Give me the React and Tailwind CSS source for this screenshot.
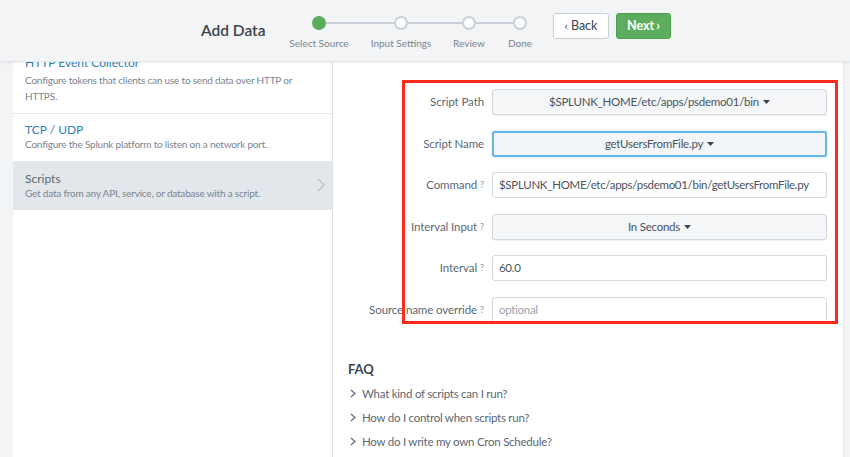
import React from "react";

const Caret = () => (
  <svg width="7" height="4" viewBox="0 0 7 4" className="ml-[4px] inline-block">
    <path d="M0 0 L7 0 L3.5 4 Z" fill="#3c444d" />
  </svg>
);

const Q = () => <sup className="ml-[3px] text-[9px] text-[#8a96a3] relative top-[-1px]">?</sup>;

function Row({ label, q, children }) {
  return (
    <div className="flex items-center h-[26px]">
      <div className="w-[136px] text-right text-[11.5px] tracking-[-0.1px] text-[#5c6773] whitespace-nowrap">
        {label}
        {q ? <Q /> : null}
      </div>
      <div className="ml-[8px] w-[335px] h-[26px]">{children}</div>
    </div>
  );
}

const SelectBtn = ({ text, focus }) => (
  <div
    className={
      "h-full w-full rounded-[3px] flex items-center justify-center text-[11.5px] tracking-[-0.25px] text-[#4a535d] " +
      (focus
        ? "border-[2px] border-[#67b7e6] bg-[#f3f6f8] shadow-[0_0_2px_#9fd3f0]"
        : "border border-[#d2d8de] bg-[#f4f6f8] shadow-[0_1px_1px_rgba(0,0,0,0.06)]")
    }
  >
    {text}
    <Caret />
  </div>
);

const TextInput = ({ text, placeholder }) => (
  <div className="h-full w-full rounded-[3px] border border-[#d2d8de] bg-white flex items-center px-[6px] text-[11.5px] tracking-[-0.3px]">
    {text ? <span className="text-[#4a535d]">{text}</span> : <span className="text-[#9aa3ad]">{placeholder}</span>}
  </div>
);

export default function App() {
  return (
    <div
      className="w-[850px] h-[457px] overflow-hidden bg-[#f2f4f5] flex flex-col"
      style={{ fontFamily: "Lato, 'Open Sans', sans-serif" }}
    >
      {/* Header */}
      <div className="relative z-10 h-[62px] shrink-0 bg-[#f2f4f5] border-b border-[#e1e5e9] shadow-[0_1px_3px_rgba(0,0,0,0.06)] flex items-start">
        <div className="ml-[201px] mt-[19px] w-[60px] text-[15.5px] font-semibold text-[#3c444d] leading-[22px] whitespace-nowrap">
          Add Data
        </div>
        {/* stepper */}
        <div className="ml-[18px] mt-[16px] flex flex-col">
          <div className="flex items-center pl-[33px]">
            <div className="w-[14px] h-[14px] rounded-full bg-[#5cae5e]" />
            <div className="w-[68px] h-[2px] bg-[#c9d0d7]" />
            <div className="w-[14px] h-[14px] rounded-full bg-white border-[2px] border-[#c9d0d7]" />
            <div className="w-[54px] h-[2px] bg-[#c9d0d7]" />
            <div className="w-[14px] h-[14px] rounded-full bg-white border-[2px] border-[#c9d0d7]" />
            <div className="w-[37px] h-[2px] bg-[#c9d0d7]" />
            <div className="w-[14px] h-[14px] rounded-full bg-white border-[2px] border-[#c9d0d7]" />
          </div>
          <div className="flex mt-[6px] text-[10px] text-[#7b8691] leading-[14px] whitespace-nowrap">
            <div className="w-[80px] text-center">Select Source</div>
            <div className="w-[80px] ml-[2px] text-center">Input Settings</div>
            <div className="w-[50px] ml-[3px] text-center">Review</div>
            <div className="w-[40px] ml-[6px] text-center">Done</div>
          </div>
        </div>
        <div className="ml-[13px] mt-[13px] flex gap-[7px]">
          <div className="w-[56px] h-[26px] rounded-[3px] border border-[#c9d0d7] bg-white flex items-center justify-center text-[#3c444d]">
            <span className="mr-[3px] text-[12px]">&lsaquo;</span>
            <span className="text-[12.5px]">Back</span>
          </div>
          <div className="w-[55px] h-[26px] rounded-[3px] bg-[#5cae5e] border border-[#4f9e52] flex items-center justify-center text-white font-bold text-[12.5px]">
            Next<span className="ml-[2px] text-[13px] font-bold">&rsaquo;</span>
          </div>
        </div>
      </div>

      {/* Body */}
      <div className="flex flex-1 min-h-0">
        <div className="w-[13px] shrink-0 bg-[#f2f4f5]" />
        {/* left list */}
        <div className="w-[320px] shrink-0 bg-white border-r border-[#dde2e7] overflow-hidden">
          <div className="mt-[-11px] px-[12px] pt-[4px] pb-[9px] border-b border-[#e3e7eb]">
            <div className="text-[12px] leading-[16px] text-[#2f7fb9]">HTTP Event Collector</div>
            <div className="text-[10px] tracking-[-0.2px] leading-[16px] text-[#7a8591] mt-[1px]">
              Configure tokens that clients can use to send data over HTTP or HTTPS.
            </div>
          </div>
          <div className="px-[12px] pt-[8px] pb-[10px] border-b border-[#e3e7eb]">
            <div className="text-[12px] leading-[15px] text-[#2f7fb9]">TCP / UDP</div>
            <div className="text-[10px] tracking-[-0.2px] leading-[14px] text-[#7a8591]">
              Configure the Splunk platform to listen on a network port.
            </div>
          </div>
          <div className="px-[12px] pt-[9px] pb-[10px] bg-[#e2e7ec] flex items-center">
            <div className="flex-1">
              <div className="text-[12px] leading-[15px] text-[#5c6773]">Scripts</div>
              <div className="text-[10px] tracking-[-0.2px] leading-[14px] text-[#7a8591]">
                Get data from any API, service, or database with a script.
              </div>
            </div>
            <svg width="8" height="14" viewBox="0 0 8 14" className="mr-[-5px] mt-[-2px]">
              <path d="M1 1 L7 7 L1 13" fill="none" stroke="#b9c2cb" strokeWidth="1.3" />
            </svg>
          </div>
        </div>
        {/* right content */}
        <div className="relative flex-1 bg-white">
          <div className="pl-[15px] pt-[27px] flex flex-col gap-[15.5px]">
            <Row label="Script Path">
              <SelectBtn text="$SPLUNK_HOME/etc/apps/psdemo01/bin" />
            </Row>
            <Row label="Script Name">
              <SelectBtn text="getUsersFromFile.py" focus />
            </Row>
            <Row label="Command" q>
              <TextInput text="$SPLUNK_HOME/etc/apps/psdemo01/bin/getUsersFromFile.py" />
            </Row>
            <Row label="Interval Input" q>
              <SelectBtn text="In Seconds" />
            </Row>
            <Row label="Interval" q>
              <TextInput text="60.0" />
            </Row>
            <Row label="Source name override" q>
              <TextInput placeholder="optional" />
            </Row>
          </div>
          <div className="pl-[15px] mt-[37px]">
            <div className="text-[13px] font-bold text-[#3c444d] leading-[18px]">FAQ</div>
            <div className="mt-[4px] flex flex-col text-[11.5px] tracking-[-0.25px] text-[#5c6773]">
              {[
                "What kind of scripts can I run?",
                "How do I control when scripts run?",
                "How do I write my own Cron Schedule?",
              ].map((t) => (
                <div key={t} className="h-[24px] flex items-center">
                  <svg width="6" height="9" viewBox="0 0 6 9" className="ml-[2px] mr-[6px]">
                    <path d="M1 1 L5 4.5 L1 8" fill="none" stroke="#5c6773" strokeWidth="1.1" />
                  </svg>
                  {t}
                </div>
              ))}
            </div>
          </div>
          {/* red annotation box */}
          <div className="absolute left-[69px] top-[18px] w-[436px] h-[244px] border-[3px] border-[#ff2a1c] pointer-events-none" />
        </div>
        <div className="w-[7px] shrink-0 bg-[#f2f4f5] border-l border-[#e5e8eb]" />
      </div>
    </div>
  );
}
